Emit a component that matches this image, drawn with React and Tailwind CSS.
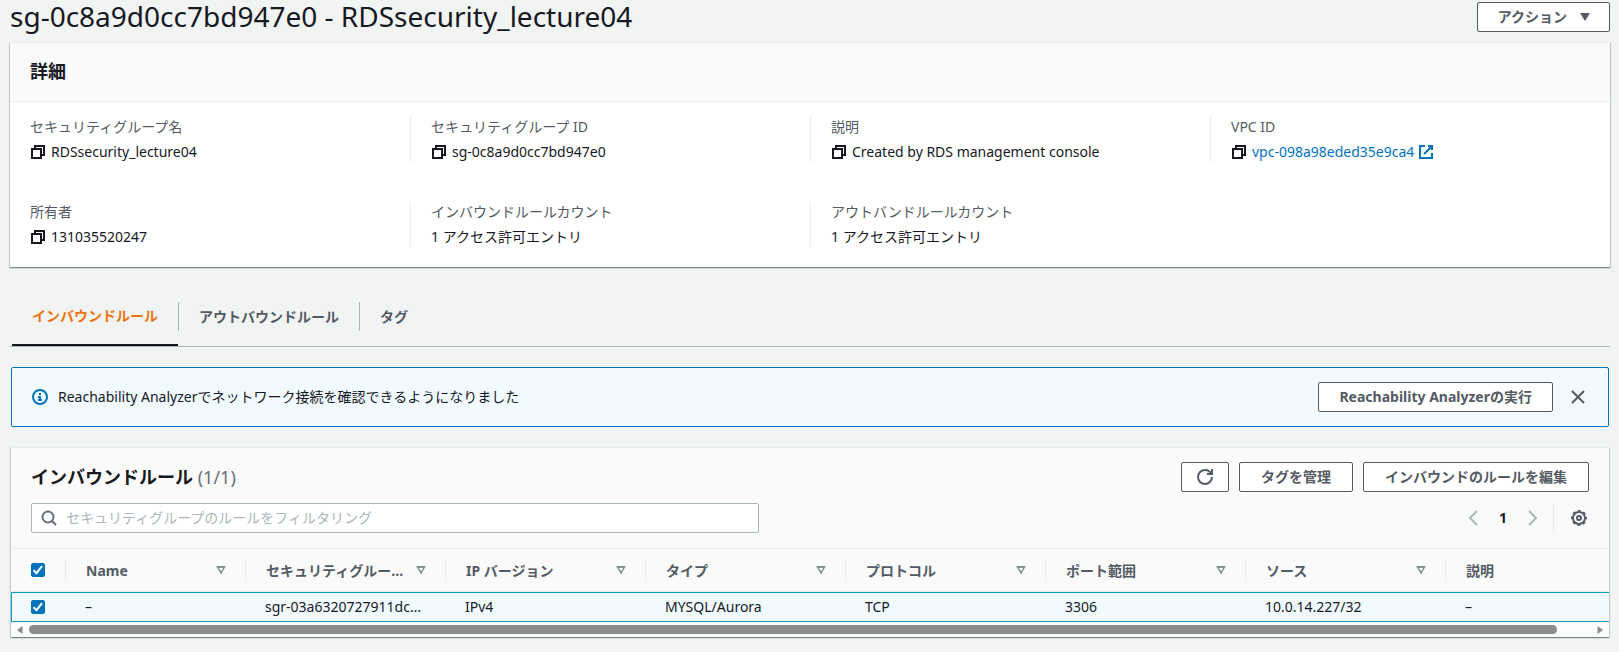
const FONT = "font-['Noto_Sans','Noto_Sans_CJK_JP',sans-serif]";
const CARD =
  "border-t border-[#eaeded] bg-white shadow-[0_1px_1px_0_rgba(0,28,36,0.3),1px_1px_1px_0_rgba(0,28,36,0.15),-1px_1px_1px_0_rgba(0,28,36,0.15)]";

function CopyIcon() {
  return (
    <svg viewBox="0 0 16 16" className="size-4" fill="none" stroke="currentColor" strokeWidth="2" aria-hidden="true">
      <path d="M2 5h9v9H2z" />
      <path d="M5 5V2h9v9h-3" />
    </svg>
  );
}

function ExternalIcon() {
  return (
    <svg viewBox="0 0 16 16" className="size-4" fill="none" stroke="currentColor" strokeWidth="2" aria-hidden="true">
      <path d="M10 2h4v4M6 10l8-8" />
      <path d="M14 9v5H2V2h5" />
    </svg>
  );
}

function InfoIcon() {
  return (
    <svg viewBox="0 0 16 16" className="size-4 text-[#0073bb]" fill="none" stroke="currentColor" strokeWidth="2" aria-hidden="true">
      <circle cx="8" cy="8" r="7" />
      <path d="M6 11h4M6 8h2.2M8 11V7M8 6V4" />
    </svg>
  );
}

function CloseIcon() {
  return (
    <svg viewBox="0 0 16 16" className="size-4" fill="none" stroke="currentColor" strokeWidth="2" aria-hidden="true">
      <path d="M2 2l12 12M14 2L2 14" />
    </svg>
  );
}

function RefreshIcon() {
  return (
    <svg viewBox="0 0 16 16" className="size-4" fill="none" stroke="currentColor" strokeWidth="2" aria-hidden="true">
      <path d="M10 5h5V0" />
      <path d="M15 8a7 7 0 1 1-7-7c2.8 0 5.2 1.6 6.3 4" />
    </svg>
  );
}

function SearchIcon() {
  return (
    <svg viewBox="0 0 16 16" className="size-4 shrink-0 text-[#687078]" fill="none" stroke="currentColor" strokeWidth="2" aria-hidden="true">
      <circle cx="7" cy="7" r="5.5" />
      <path d="M15 15l-4.2-4.2" />
    </svg>
  );
}

function ChevronIcon({ d }) {
  return (
    <svg viewBox="0 0 16 16" className="size-4 text-[#aab7b8]" fill="none" stroke="currentColor" strokeWidth="2" aria-hidden="true">
      <path d={d} />
    </svg>
  );
}

function GearIcon() {
  return (
    <svg viewBox="0 0 16 16" className="size-4" fill="none" stroke="currentColor" aria-hidden="true">
      <circle cx="8" cy="8" r="6" strokeWidth="2" />
      <circle cx="8" cy="8" r="7.2" strokeWidth="1.6" strokeDasharray="2.83 2.83" strokeDashoffset="1.4" />
      <circle cx="8" cy="8" r="2" strokeWidth="2" />
    </svg>
  );
}

function SortIcon() {
  return (
    <svg viewBox="0 0 16 16" className="size-4 shrink-0 text-[#879596]" fill="currentColor" fillRule="evenodd" aria-hidden="true">
      <path d="M3 4h10l-5 8.5zM6 6l2 3.2L10 6z" />
    </svg>
  );
}

function Button({ children, className = "px-5", ...rest }) {
  return (
    <button
      type="button"
      className={`flex h-[30px] shrink-0 items-center justify-center whitespace-nowrap rounded-xs border border-[#545b64] bg-white font-bold text-[#545b64] ${className}`}
      {...rest}
    >
      {children}
    </button>
  );
}

function Checkbox({ label }) {
  return (
    <span className="grid size-[14px]">
      <input
        type="checkbox"
        defaultChecked
        aria-label={label}
        className="peer col-start-1 row-start-1 size-[14px] appearance-none rounded-xs border border-[#687078] bg-white checked:border-[#0073bb] checked:bg-[#0073bb]"
      />
      <svg
        viewBox="0 0 14 14"
        className="pointer-events-none invisible col-start-1 row-start-1 size-[14px] peer-checked:visible"
        fill="none"
        stroke="#fff"
        strokeWidth="2"
        aria-hidden="true"
      >
        <path d="M2.5 7.2l3 3 5.5-7" />
      </svg>
    </span>
  );
}

const details = [
  { label: "セキュリティグループ名", value: "RDSsecurity_lecture04", copy: true },
  { label: "セキュリティグループ ID", value: "sg-0c8a9d0cc7bd947e0", copy: true },
  { label: "説明", value: "Created by RDS management console", copy: true },
  { label: "VPC ID", value: "vpc-098a98eded35e9ca4", copy: true, link: true },
  { label: "所有者", value: "131035520247", copy: true },
  { label: "インバウンドルールカウント", value: "1 アクセス許可エントリ" },
  { label: "アウトバンドルールカウント", value: "1 アクセス許可エントリ" },
];

const columns = [
  { name: "Name", value: "–" },
  { name: "セキュリティグルー…", value: "sgr-03a6320727911dc…" },
  { name: "IP バージョン", value: "IPv4" },
  { name: "タイプ", value: "MYSQL/Aurora" },
  { name: "プロトコル", value: "TCP" },
  { name: "ポート範囲", value: "3306" },
  { name: "ソース", value: "10.0.14.227/32" },
  { name: "説明", value: "–", last: true },
];

function Details() {
  return (
    <section className={`mt-[10px] ${CARD}`}>
      <div className="border-b border-[#eaeded] bg-[#fafafa] px-5 pb-[2px]">
        <h2 className="text-lg leading-[56px] font-bold">詳細</h2>
      </div>
      <dl className="grid grid-cols-4 gap-y-10 pt-[15px] pb-5">
        {details.map((d, i) => (
          <div
            key={d.label}
            className={`flex flex-col gap-[5px] px-5 ${i % 4 === 0 ? "" : "border-l border-[#eaeded]"}`}
          >
            <dt className="text-[#545b64]">{d.label}</dt>
            <dd className="flex items-center gap-[5px]">
              {d.copy && (
                <button type="button" aria-label={`${d.label}をコピー`}>
                  <CopyIcon />
                </button>
              )}
              {d.link ? (
                <a href="#vpc" className="flex items-center gap-1 text-[#0073bb]">
                  {d.value}
                  <ExternalIcon />
                </a>
              ) : (
                <span>{d.value}</span>
              )}
            </dd>
          </div>
        ))}
      </dl>
    </section>
  );
}

function Tabs() {
  return (
    <div role="tablist" className="mt-5 flex border-b border-[#aab7b8] pl-[2px] font-bold text-[#545b64]">
      <button type="button" role="tab" aria-selected="true" className="border-b-2 border-[#16191f] py-[15px] text-[#ec7211]">
        <span className="block px-5 leading-[27px]">インバウンドルール</span>
      </button>
      <button type="button" role="tab" aria-selected="false" className="py-[15px]">
        <span className="block border-x border-[#aab7b8] px-5 leading-[29px]">アウトバウンドルール</span>
      </button>
      <button type="button" role="tab" aria-selected="false" className="py-[15px]">
        <span className="block px-5 leading-[29px]">タグ</span>
      </button>
    </div>
  );
}

function Notice() {
  return (
    <div className="mx-px mt-5 flex h-[60px] items-center rounded-xs border border-[#0073bb] bg-[#f1faff] pl-5">
      <InfoIcon />
      <p className="ml-[10px] grow">Reachability Analyzerでネットワーク接続を確認できるようになりました</p>
      <Button>Reachability Analyzerの実行</Button>
      <button type="button" aria-label="閉じる" className="py-2 pr-[22px] pl-[17px] text-[#545b64]">
        <CloseIcon />
      </button>
    </div>
  );
}

function Rules() {
  return (
    <section className={`mx-px mt-5 ${CARD}`}>
      <div className="flex flex-col gap-[11px] bg-[#fafafa] px-5 pt-[14px] pb-[15px]">
        <div className="flex items-center gap-[10px]">
          <h2 className="grow text-lg leading-7 font-bold">
            インバウンドルール <span className="font-normal text-[#687078]">(1/1)</span>
          </h2>
          <Button className="px-[15px]" aria-label="更新">
            <RefreshIcon />
          </Button>
          <Button className="px-[21px]">タグを管理</Button>
          <Button className="px-[21px]">インバウンドのルールを編集</Button>
        </div>
        <div className="flex items-center justify-between">
          <label className="flex h-[30px] w-[728px] items-center gap-[9px] rounded-xs border border-[#aab7b8] bg-white px-[9px]">
            <SearchIcon />
            <input
              type="search"
              aria-label="ルールをフィルタリング"
              placeholder="セキュリティグループのルールをフィルタリング"
              className="w-full bg-transparent outline-none placeholder:text-[#aab7b8]"
            />
          </label>
          <div className="flex items-center">
            <button type="button" aria-label="前のページ">
              <ChevronIcon d="M12 1L5 8l7 7" />
            </button>
            <button type="button" className="px-[18px] font-bold">
              1
            </button>
            <button type="button" aria-label="次のページ">
              <ChevronIcon d="M4 1l7 7-7 7" />
            </button>
            <div className="ml-3 flex h-[30px] items-center border-l border-[#eaeded] pr-[2px] pl-[17px]">
              <button type="button" aria-label="設定" className="text-[#545b64]">
                <GearIcon />
              </button>
            </div>
          </div>
        </div>
      </div>
      <div className="overflow-hidden">
        <table className="w-full table-fixed border-separate border-spacing-0 text-left">
          <colgroup>
            <col className="w-[54px]" />
            <col className="w-[180px]" />
            <col className="w-[200px]" />
            <col className="w-[200px]" />
            <col className="w-[200px]" />
            <col className="w-[200px]" />
            <col className="w-[200px]" />
            <col className="w-[200px]" />
            <col />
          </colgroup>
          <thead className="bg-[#fafafa] text-[#545b64]">
            <tr className="h-11">
              <th className="border-y border-[#eaeded] py-0 pr-0 pl-5">
                <Checkbox label="すべて選択" />
              </th>
              {columns.map((c) => (
                <th key={c.name} className="border-y border-[#eaeded] p-0 font-bold">
                  <div className="flex items-center justify-between border-l border-[#eaeded] pr-4 pl-5 leading-[21px]">
                    <span className="whitespace-nowrap">{c.name}</span>
                    {!c.last && <SortIcon />}
                  </div>
                </th>
              ))}
            </tr>
          </thead>
          <tbody>
            <tr className="h-[30px] bg-[#f1faff]">
              <td className="border-y border-l border-[#00a1c9] py-0 pr-0 pl-[19px]">
                <Checkbox label="ルールを選択" />
              </td>
              {columns.map((c) => (
                <td key={c.name} className="border-y border-[#00a1c9] py-0 pr-0 pl-5 whitespace-nowrap">
                  {c.value}
                </td>
              ))}
            </tr>
          </tbody>
        </table>
        <div className="flex h-[15px] items-center bg-[#fcfcfc] px-[6px] text-[#8b8b8b]" aria-hidden="true">
          <svg viewBox="0 0 6 8" className="h-2 w-[6px]" fill="currentColor">
            <path d="M5.5 0v8L0 4z" />
          </svg>
          <div className="mx-[6px] grow">
            <div className="h-[9px] w-[97.8%] rounded-full bg-[#8b8b8b]" />
          </div>
          <svg viewBox="0 0 6 8" className="h-2 w-[6px]" fill="currentColor">
            <path d="M.5 0v8L6 4z" />
          </svg>
        </div>
      </div>
    </section>
  );
}

export default function App() {
  return (
    <main className={`min-h-screen bg-[#f2f3f3] pr-[9px] pl-[10px] pb-[15px] text-sm leading-5 text-[#16191f] ${FONT}`}>
      <header className="flex items-start justify-between">
        <h1 className="text-[28px] leading-8">sg-0c8a9d0cc7bd947e0 - RDSsecurity_lecture04</h1>
        <div className="pt-[2px]">
          <Button className="gap-[10px] pr-4 pl-5">
            アクション
            <svg viewBox="0 0 16 16" className="size-4" fill="currentColor" aria-hidden="true">
              <path d="M3 4h10l-5 8z" />
            </svg>
          </Button>
        </div>
      </header>
      <Details />
      <Tabs />
      <Notice />
      <Rules />
    </main>
  );
}
